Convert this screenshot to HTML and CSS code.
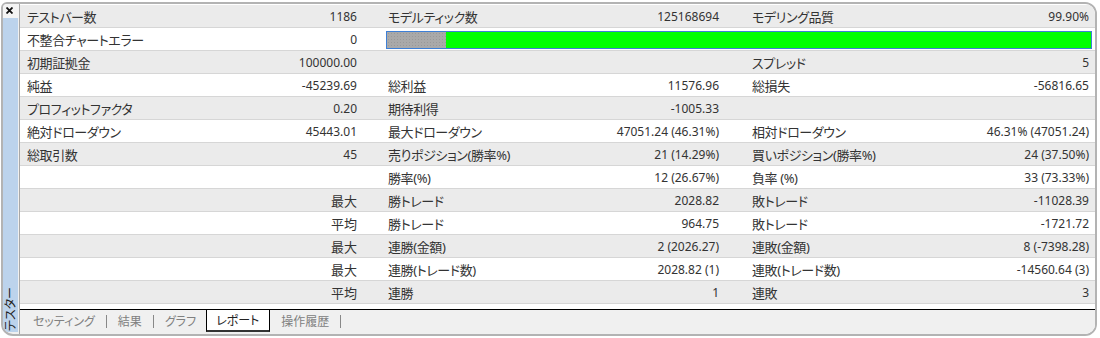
FILE: index.html
```html
<!DOCTYPE html>
<html lang="ja">
<head>
  <meta charset="UTF-8">
  <title>テスター - レポート</title>
  <link rel="stylesheet" href="styles.css">
</head>
<body>
  <div class="frame">
    <div class="side">
      <div class="close">
        <svg width="7" height="7" viewBox="0 0 7 7"><path d="M0.5 0.5L6.5 6.5M6.5 0.5L0.5 6.5" stroke="#111" stroke-width="1.8"/></svg>
      </div>
      <div class="side-bar">
        <span class="side-title">テスター</span>
      </div>
    </div>

    <div class="main">
      <div class="report">
        <div class="row">
          <span class="lbl">テストバー数</span><span class="val">1186</span>
          <span class="lbl">モデルティック数</span><span class="val">125168694</span>
          <span class="lbl">モデリング品質</span><span class="val">99.90%</span>
        </div>
        <div class="row">
          <span class="lbl">不整合チャートエラー</span><span class="val">0</span>
          <div class="quality"><div class="quality-bad"></div></div>
        </div>
        <div class="row">
          <span class="lbl">初期証拠金</span><span class="val">100000.00</span>
          <span class="lbl"></span><span class="val"></span>
          <span class="lbl">スプレッド</span><span class="val">5</span>
        </div>
        <div class="row">
          <span class="lbl">純益</span><span class="val">-45239.69</span>
          <span class="lbl">総利益</span><span class="val">11576.96</span>
          <span class="lbl">総損失</span><span class="val">-56816.65</span>
        </div>
        <div class="row">
          <span class="lbl">プロフィットファクタ</span><span class="val">0.20</span>
          <span class="lbl">期待利得</span><span class="val">-1005.33</span>
          <span class="lbl"></span><span class="val"></span>
        </div>
        <div class="row">
          <span class="lbl">絶対ドローダウン</span><span class="val">45443.01</span>
          <span class="lbl">最大ドローダウン</span><span class="val">47051.24 (46.31%)</span>
          <span class="lbl">相対ドローダウン</span><span class="val">46.31% (47051.24)</span>
        </div>
        <div class="row">
          <span class="lbl">総取引数</span><span class="val">45</span>
          <span class="lbl">売りポジション(勝率%)</span><span class="val">21 (14.29%)</span>
          <span class="lbl">買いポジション(勝率%)</span><span class="val">24 (37.50%)</span>
        </div>
        <div class="row">
          <span class="lbl"></span><span class="val"></span>
          <span class="lbl">勝率(%)</span><span class="val">12 (26.67%)</span>
          <span class="lbl">負率 (%)</span><span class="val">33 (73.33%)</span>
        </div>
        <div class="row">
          <span class="lbl"></span><span class="val jp">最大</span>
          <span class="lbl">勝トレード</span><span class="val">2028.82</span>
          <span class="lbl">敗トレード</span><span class="val">-11028.39</span>
        </div>
        <div class="row">
          <span class="lbl"></span><span class="val jp">平均</span>
          <span class="lbl">勝トレード</span><span class="val">964.75</span>
          <span class="lbl">敗トレード</span><span class="val">-1721.72</span>
        </div>
        <div class="row">
          <span class="lbl"></span><span class="val jp">最大</span>
          <span class="lbl">連勝(金額)</span><span class="val">2 (2026.27)</span>
          <span class="lbl">連敗(金額)</span><span class="val">8 (-7398.28)</span>
        </div>
        <div class="row">
          <span class="lbl"></span><span class="val jp">最大</span>
          <span class="lbl">連勝(トレード数)</span><span class="val">2028.82 (1)</span>
          <span class="lbl">連敗(トレード数)</span><span class="val">-14560.64 (3)</span>
        </div>
        <div class="row">
          <span class="lbl"></span><span class="val jp">平均</span>
          <span class="lbl">連勝</span><span class="val">1</span>
          <span class="lbl">連敗</span><span class="val">3</span>
        </div>
      </div>

      <div class="tabs">
        <span class="tab">セッティング</span><span class="sep"></span>
        <span class="tab">結果</span><span class="sep"></span>
        <span class="tab">グラフ</span>
        <span class="tab active">レポート</span>
        <span class="tab">操作履歴</span><span class="sep"></span>
      </div>
    </div>
  </div>
</body>
</html>
```

FILE: styles.css
```css
body {
  margin: 0;
  background: #fff;
  font-family: "Noto Sans", "Noto Sans CJK JP", sans-serif;
  font-size: 12px;
  color: #333;
}

.frame {
  display: flex;
  box-sizing: border-box;
  height: 334px;
  margin: 2px 3px 0 1px;
  border: 2px solid #b3b3b3;
  border-radius: 6px 12px 12px 12px;
  overflow: hidden;
  background: #f0f0f0;
}

/* left docking bar */
.side {
  width: 16px;
  display: flex;
  flex-direction: column;
  border-right: 1px solid #a8a8a8;
}

.close {
  height: 11px;
  padding: 3px 0 0 3px;
  background: #f4f4f4;
}

.close svg {
  display: block;
}

.side-bar {
  flex: 1;
  margin: 0 1px 2px 0;
  background: #bcd3ec;
  display: flex;
  align-items: flex-end;
  justify-content: center;
}

.side-title {
  writing-mode: vertical-rl;
  text-orientation: sideways;
  transform: rotate(180deg);
  font-size: 12px;
  font-feature-settings: "palt";
  color: #222;
  line-height: 14px;
  padding-top: 1px;
}

.main {
  flex: 1;
  display: flex;
  flex-direction: column;
  background: #fff;
}

.report {
  padding-top: 1px;
  height: 304px;
  border-bottom: 1px solid #000;
}

.row {
  display: grid;
  grid-template-columns: 180px 182px 178px 185px 155px 1fr;
  height: 22px;
  border-bottom: 1px solid #d6d6d6;
  align-items: center;
}

.row:nth-child(odd) {
  background: #ebebeb;
}

.lbl {
  padding-left: 7px;
  font-size: 13px;
  letter-spacing: -0.4px;
  font-feature-settings: "palt";
  white-space: nowrap;
}

.row .lbl:nth-child(3) {
  padding-left: 6px;
}

.val {
  text-align: right;
  white-space: nowrap;
}

.row .val:nth-child(2) {
  padding-right: 25px;
}

.row .val:nth-child(4) {
  padding-right: 26px;
}

.row .val:nth-child(6) {
  padding-right: 6px;
}

.val.jp {
  font-size: 13px;
}

.quality {
  grid-column: 3 / 7;
  height: 16px;
  margin: 1px 3px 0 4px;
  border: 1px solid #3d7fd6;
  background: #00ff00;
  display: flex;
}

.quality-bad {
  width: 59px;
  background-color: #a9a9a9;
  background-image: radial-gradient(#999 0.6px, transparent 0.8px);
  background-size: 3px 3px;
}

/* bottom tabs */
.tabs {
  flex: 1;
  display: flex;
  align-items: flex-start;
  background: #f0f0f0;
  padding-left: 2px;
}

.tab {
  display: flex;
  align-items: center;
  padding: 0 11px;
  font-size: 12px;
  font-feature-settings: "palt";
  color: #808080;
  height: 21px;
}

.tab.active {
  box-sizing: border-box;
  padding: 0 10px 0 9px;
  margin-left: -1px;
  background: #fff;
  color: #222;
  border: 1px solid #000;
  border-top: none;
  border-bottom: 2px solid #333;
  height: 22px;
}

.sep {
  width: 1px;
  height: 13px;
  margin-top: 5px;
  background: #888;
}
```
